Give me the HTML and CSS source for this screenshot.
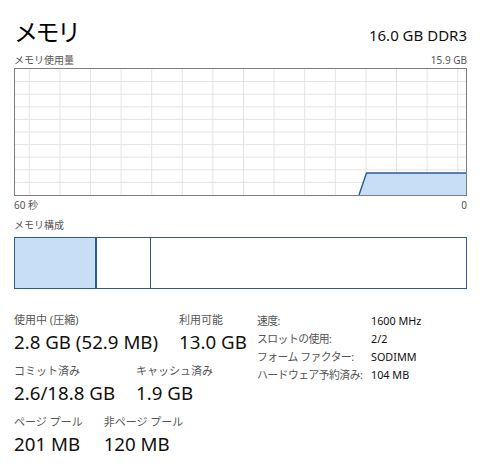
FILE: index.html
```html
<!DOCTYPE html>
<html lang="ja">
<head>
<meta charset="utf-8">
<title>メモリ</title>
<link rel="stylesheet" href="styles.css">
</head>
<body>
<div class="page">
  <header class="head">
    <h1 class="title">メモリ</h1>
    <div class="spec">16.0 GB DDR3</div>
  </header>
  <div class="caption-row">
    <span>メモリ使用量</span>
    <span>15.9 GB</span>
  </div>
  <div class="graph">
    <svg class="graph-svg" viewBox="0 0 451 126" preserveAspectRatio="none">
      <g class="grid">
        <line x1="14.3" y1="0" x2="14.3" y2="126"/>
        <line x1="44.9" y1="0" x2="44.9" y2="126"/>
        <line x1="75.5" y1="0" x2="75.5" y2="126"/>
        <line x1="106.1" y1="0" x2="106.1" y2="126"/>
        <line x1="136.7" y1="0" x2="136.7" y2="126"/>
        <line x1="167.3" y1="0" x2="167.3" y2="126"/>
        <line x1="197.9" y1="0" x2="197.9" y2="126"/>
        <line x1="228.5" y1="0" x2="228.5" y2="126"/>
        <line x1="259.1" y1="0" x2="259.1" y2="126"/>
        <line x1="289.7" y1="0" x2="289.7" y2="126"/>
        <line x1="320.3" y1="0" x2="320.3" y2="126"/>
        <line x1="350.9" y1="0" x2="350.9" y2="126"/>
        <line x1="381.5" y1="0" x2="381.5" y2="126"/>
        <line x1="412.1" y1="0" x2="412.1" y2="126"/>
        <line x1="442.7" y1="0" x2="442.7" y2="126"/>
        <line x1="0" y1="12.6" x2="451" y2="12.6"/>
        <line x1="0" y1="25.2" x2="451" y2="25.2"/>
        <line x1="0" y1="37.8" x2="451" y2="37.8"/>
        <line x1="0" y1="50.4" x2="451" y2="50.4"/>
        <line x1="0" y1="63" x2="451" y2="63"/>
        <line x1="0" y1="75.6" x2="451" y2="75.6"/>
        <line x1="0" y1="88.2" x2="451" y2="88.2"/>
        <line x1="0" y1="100.8" x2="451" y2="100.8"/>
        <line x1="0" y1="113.4" x2="451" y2="113.4"/>
      </g>
      <polygon class="area" points="344,126 351.5,104 451,104 451,126"/>
      <polyline class="edge" points="344,126 351.5,104 451,104"/>
    </svg>
  </div>
  <div class="caption-row axis">
    <span>60 秒</span>
    <span>0</span>
  </div>
  <div class="caption-row">
    <span>メモリ構成</span>
  </div>
  <div class="compose">
    <div class="seg seg-used"></div>
    <div class="seg seg-mod"></div>
    <div class="seg seg-free"></div>
  </div>
  <section class="stats">
    <div class="stats-left">
      <div class="stat-row">
        <div class="stat"><div class="stat-label">使用中 (圧縮)</div><div class="stat-value">2.8 GB (52.9 MB)</div></div>
        <div class="stat"><div class="stat-label">利用可能</div><div class="stat-value">13.0 GB</div></div>
      </div>
      <div class="stat-row">
        <div class="stat"><div class="stat-label">コミット済み</div><div class="stat-value">2.6/18.8 GB</div></div>
        <div class="stat"><div class="stat-label">キャッシュ済み</div><div class="stat-value">1.9 GB</div></div>
      </div>
      <div class="stat-row">
        <div class="stat"><div class="stat-label">ページ プール</div><div class="stat-value">201 MB</div></div>
        <div class="stat"><div class="stat-label">非ページ プール</div><div class="stat-value">120 MB</div></div>
      </div>
    </div>
    <dl class="props">
      <dt>速度:</dt><dd>1600 MHz</dd>
      <dt>スロットの使用:</dt><dd>2/2</dd>
      <dt>フォーム ファクター:</dt><dd>SODIMM</dd>
      <dt>ハードウェア予約済み:</dt><dd>104 MB</dd>
    </dl>
  </section>
</div>
</body>
</html>
```
FILE: styles.css
```css
html, body {
  margin: 0;
  padding: 0;
  background: #ffffff;
}
body {
  font-family: "Noto Sans", "Noto Sans CJK JP", sans-serif;
  color: #000;
}
.page {
  padding: 12px 15px 0 14px;
}
.head {
  box-sizing: border-box;
  display: flex;
  justify-content: space-between;
  align-items: flex-end;
  height: 40px;
  padding-bottom: 5px;
}
.title {
  margin: 0;
  font-weight: 400;
  font-size: 24px;
  line-height: 32px;
  letter-spacing: -2.5px;
  font-family: "Noto Sans CJK JP", sans-serif;
}
.spec {
  font-size: 15px;
  line-height: 20px;
  padding-bottom: 2px;
  color: #111;
}
.caption-row {
  display: flex;
  justify-content: space-between;
  font-size: 10px;
  line-height: 14px;
  color: #555;
  margin-top: 1px;
}
.caption-row span {
  font-family: "Noto Sans", "Noto Sans CJK JP", sans-serif;
}
.graph {
  height: 126px;
  border: 1px solid #7d7d7d;
  margin-top: 1px;
}
.graph-svg {
  display: block;
  width: 100%;
  height: 100%;
}
.grid line {
  stroke: #e4e4e4;
  stroke-width: 1;
}
.area {
  fill: #c7def6;
}
.edge {
  fill: none;
  stroke: #285d94;
  stroke-width: 1.4;
}
.axis {
  margin-top: 2px;
  margin-bottom: 6px;
}
.compose {
  display: flex;
  height: 50px;
  border: 1px solid #2b5c8a;
  margin-top: 5px;
}
.seg {
  height: 100%;
}
.seg-used {
  width: 80px;
  background: #c7def6;
  border-right: 2px solid #2b5c8a;
}
.seg-mod {
  width: 53px;
  border-right: 1px solid #2b5c8a;
}
.seg-free {
  flex: 1;
}
.stats {
  display: flex;
  margin-top: 23px;
}
.stats-left {
  width: 243px;
}
.stat-row {
  display: flex;
  gap: 21px;
  margin-bottom: 7px;
}
.stat-label {
  font-size: 11px;
  line-height: 15px;
  color: #555;
}
.stat-value {
  font-size: 18.7px;
  line-height: 29px;
  color: #111;
}
.props {
  margin: 0;
  display: grid;
  grid-template-columns: 114px auto;
  grid-auto-rows: 18px;
  font-size: 10.8px;
  line-height: 18px;
  margin-top: 0;
}
.props dt {
  color: #555;
  letter-spacing: -0.5px;
  white-space: nowrap;
}
.props dd {
  margin: 0;
  color: #111;
}
```
